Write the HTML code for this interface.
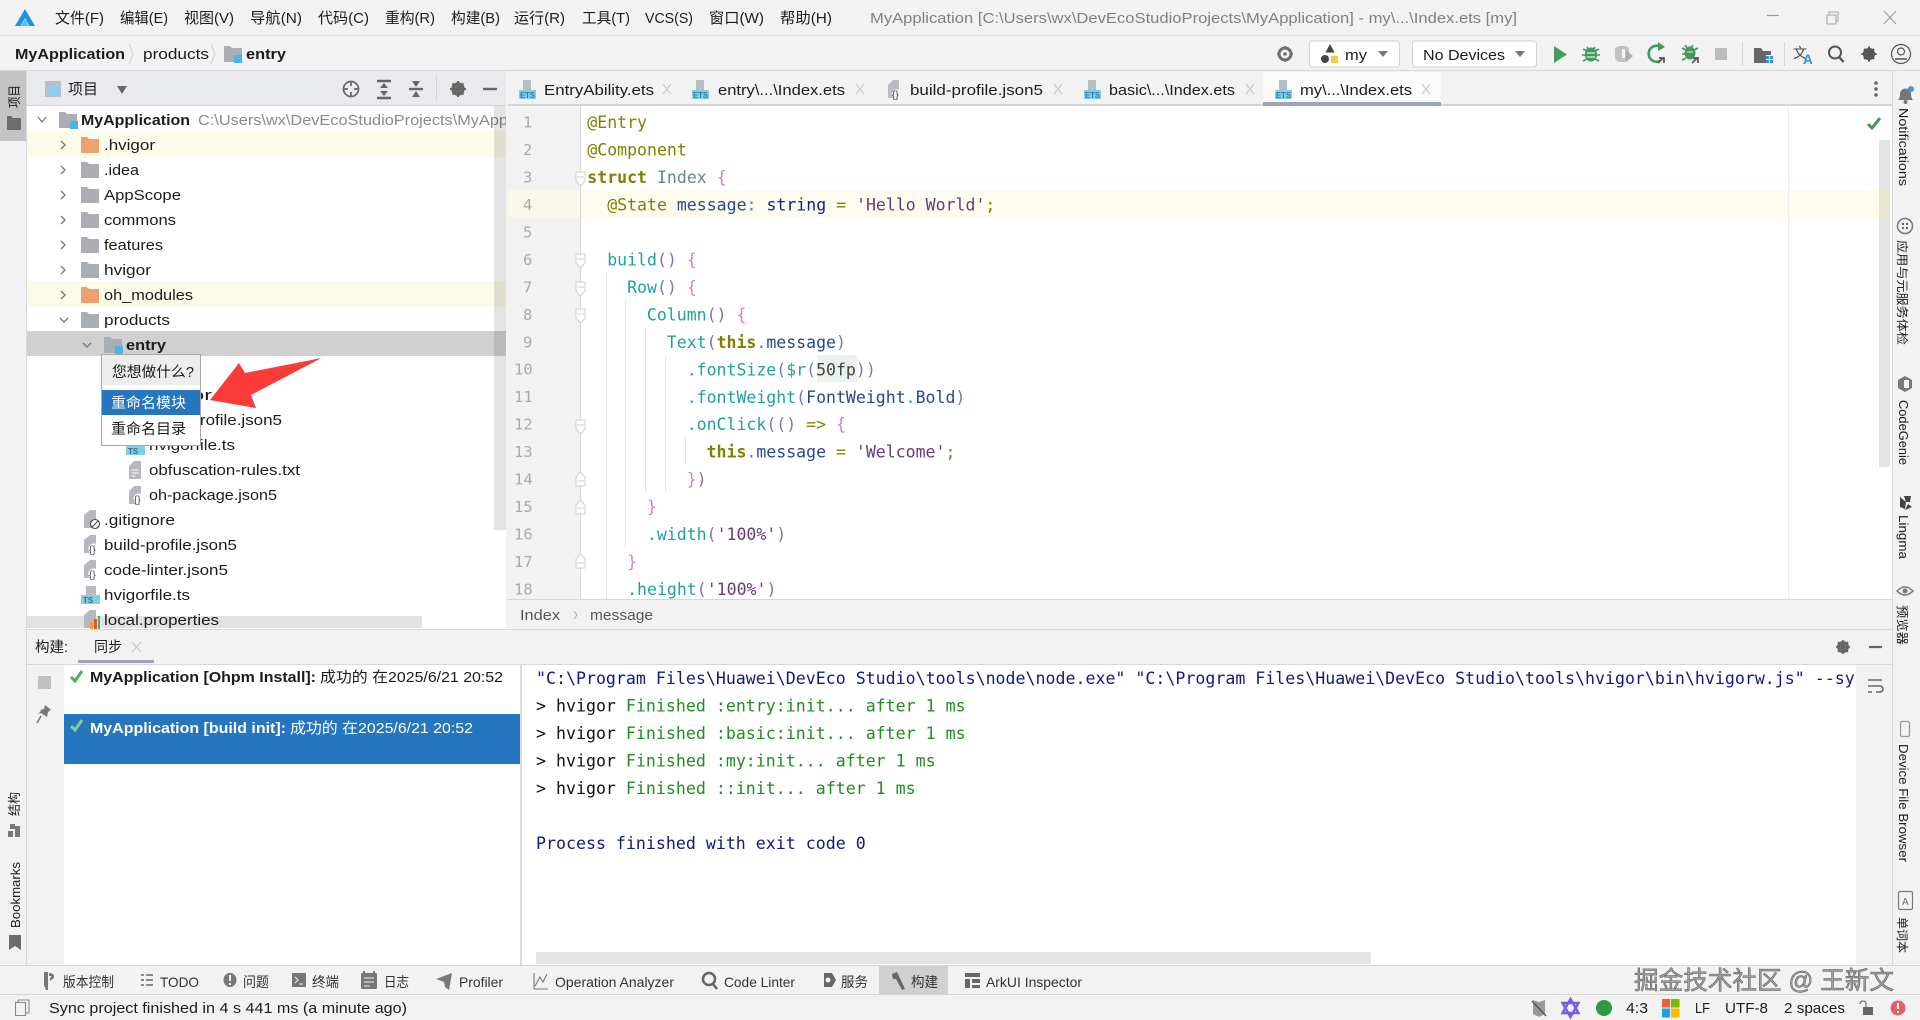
<!DOCTYPE html>
<html lang="zh"><head><meta charset="utf-8"><title>MyApplication</title>
<style>
html,body{margin:0;padding:0;background:#f2f2f2;overflow:hidden}
svg{display:block}
text{font-family:"Liberation Sans","Noto Sans CJK SC",sans-serif;font-size:15px;fill:#1c1c1c}
.g{fill:#808080}
.b{font-weight:bold}
.m{font-family:"DejaVu Sans Mono","Liberation Mono",monospace;font-size:16.55px;white-space:pre}
.c{font-size:16.6px}
.ln{font-family:"DejaVu Sans Mono","Liberation Mono",monospace;font-size:15.5px;fill:#a9a9a9}
.ol{fill:#808000}.olb{fill:#808000;font-weight:bold}.te{fill:#22a0a0}.pu{fill:#7878b8}.pk{fill:#d87fc0}.nv{fill:#27488e}.dk{fill:#10228c}.st{fill:#6a3a78}.gy{fill:#668888}
.cb{fill:#111a80}.cg{fill:#1f8f1f}.ck{fill:#111}
.tb{font-size:14px;fill:#333}
</style></head><body>
<svg width="1920" height="1020" viewBox="0 0 1920 1020" xmlns="http://www.w3.org/2000/svg">
<rect width="1920" height="1020" fill="#f2f2f2"/>

<!-- title bar -->
<path d="M25 9L35 26H29.5L25 18 20.5 26H15Z" fill="#1c8fe6"/><path d="M25 19L29 26H21Z" fill="#57c3e8"/>
<text x="55" y="23" textLength="49" lengthAdjust="spacingAndGlyphs">文件(F)</text>
<text x="120" y="23" textLength="48" lengthAdjust="spacingAndGlyphs">编辑(E)</text>
<text x="184" y="23" textLength="50" lengthAdjust="spacingAndGlyphs">视图(V)</text>
<text x="250" y="23" textLength="52" lengthAdjust="spacingAndGlyphs">导航(N)</text>
<text x="318" y="23" textLength="51" lengthAdjust="spacingAndGlyphs">代码(C)</text>
<text x="385" y="23" textLength="50" lengthAdjust="spacingAndGlyphs">重构(R)</text>
<text x="451" y="23" textLength="49" lengthAdjust="spacingAndGlyphs">构建(B)</text>
<text x="514" y="23" textLength="51" lengthAdjust="spacingAndGlyphs">运行(R)</text>
<text x="582" y="23" textLength="48" lengthAdjust="spacingAndGlyphs">工具(T)</text>
<text x="645" y="23" textLength="48" lengthAdjust="spacingAndGlyphs">VCS(S)</text>
<text x="709" y="23" textLength="55" lengthAdjust="spacingAndGlyphs">窗口(W)</text>
<text x="780" y="23" textLength="52" lengthAdjust="spacingAndGlyphs">帮助(H)</text>
<text class="g" x="870" y="23" textLength="647" lengthAdjust="spacingAndGlyphs">MyApplication [C:\Users\wx\DevEcoStudioProjects\MyApplication] - my\...\Index.ets [my]</text>
<path d="M1767 15.500h12" stroke="#999" stroke-width="1.200"/>
<path d="M1827 15h9v9h-9zM1829 15v-3h9v9h-2" fill="none" stroke="#aaa" stroke-width="1.100"/>
<path d="M1884 11l12 13M1896 11l-12 13" stroke="#999" stroke-width="1.100"/>
<rect y="35" width="1920" height="1" fill="#dcdcdc"/>

<!-- nav bar -->
<text class="b" x="15" y="59" textLength="110" lengthAdjust="spacingAndGlyphs">MyApplication</text>
<path d="M129 44l4 10-4 10" fill="none" stroke="#d0d0d0"/>
<text x="143" y="59" textLength="66" lengthAdjust="spacingAndGlyphs">products</text>
<path d="M211 44l4 10-4 10" fill="none" stroke="#d0d0d0"/>
<path d="M224 46h6l2 2h10v14h-18z" fill="#a9aeb5"/><rect x="234" y="55" width="8" height="8" fill="#4db4e4"/>
<text class="b" x="246" y="59" textLength="40" lengthAdjust="spacingAndGlyphs">entry</text>
<circle cx="1285" cy="54" r="6" fill="none" stroke="#6e6e6e" stroke-width="3"/><circle cx="1285" cy="54" r="1.800" fill="#6e6e6e"/><path d="M1285 46v2M1285 60v2M1277 54h2M1291 54h2" stroke="#6e6e6e" stroke-width="1.500"/>
<rect x="1309.500" y="41" width="90" height="26" rx="3" fill="#fff" stroke="#d2d2d2"/>
<path d="M1330 44l4.500 8.500h-9z" fill="#444"/><circle cx="1325" cy="59" r="4" fill="#444"/><rect x="1331" y="56" width="7" height="7" fill="#f5c842"/>
<text x="1345" y="60" textLength="22" lengthAdjust="spacingAndGlyphs">my</text>
<path d="M1378 51h10l-5 6z" fill="#777"/>
<rect x="1412.500" y="41" width="124" height="26" rx="3" fill="#fff" stroke="#d2d2d2"/>
<text x="1423" y="60" textLength="82" lengthAdjust="spacingAndGlyphs">No Devices</text>
<path d="M1515 51h10l-5 6z" fill="#777"/>
<path d="M1554 46l13 8.500-13 8.500z" fill="#4a9a5c"/>
<ellipse cx="1591" cy="54.500" rx="6" ry="7" fill="#3f9a5c"/><path d="M1583 49l4 2M1599 49l-4 2M1582 55h4M1596 55h4M1583 61l4-2M1599 61l-4-2M1587 47l2 3M1595 47l-2 3" stroke="#3f9a5c" stroke-width="1.600"/><path d="M1587 53h8M1587 57h8" stroke="#e8f2ea" stroke-width="1.200"/>
<path d="M1615 48l4-2h7l3 2v11l-3 3h-7l-4-3z" fill="#c2c2c2"/><path d="M1626 50l7 6-7 6z" fill="#aeaeae"/><rect x="1622" y="49" width="3" height="9" fill="#f2f2f2"/>
<path d="M1661 47a8 8 0 1 0-1 14" fill="none" stroke="#3f9a5c" stroke-width="2.600"/><path d="M1658 42l7 5-7 4z" fill="#3f9a5c"/><path d="M1658 63l5-5M1659 58h5v5" fill="none" stroke="#555" stroke-width="1.700"/>
<ellipse cx="1690" cy="53" rx="5.500" ry="6.500" fill="#3f9a5c"/><path d="M1682 48l4 2M1698 48l-4 2M1682 54h4M1682 60l4-2M1685 45l2 3M1693 45l-2 3" stroke="#3f9a5c" stroke-width="1.600"/><path d="M1692 63l5-5M1693 58h5v5" fill="none" stroke="#555" stroke-width="1.700"/><path d="M1687 52h6" stroke="#e8f2ea"/>
<rect x="1715" y="48" width="12" height="12" fill="#bbb"/>
<rect x="1742" y="42" width="1" height="24" fill="#d6d6d6"/>
<path d="M1754 48h7l2 3h8v4h-5v8h-12z" fill="#666"/><rect x="1766" y="56" width="3" height="3" fill="#3b8fd6"/><rect x="1770" y="56" width="3" height="3" fill="#3b8fd6"/><rect x="1766" y="60" width="3" height="3" fill="#3b8fd6"/><rect x="1770" y="60" width="3" height="3" fill="#3b8fd6"/>
<rect x="1784" y="42" width="1" height="24" fill="#d6d6d6"/>
<text x="1793" y="58" style="font-size:14px;fill:#444">文</text>
<text class="b" x="1803" y="64" style="font-size:13.500px;fill:#2f8fe0">A</text>
<circle cx="1835" cy="52.500" r="6" fill="none" stroke="#555" stroke-width="2"/><path d="M1839.500 57.500l4 4.500" stroke="#555" stroke-width="2.400"/>
<circle cx="1869" cy="54" r="4.500" fill="none" stroke="#555" stroke-width="3.200"/><path d="M1869 46.500v15M1861.500 54h15M1864 49l10 10M1874 49l-10 10" stroke="#555" stroke-width="2"/>
<circle cx="1901" cy="54" r="9.500" fill="none" stroke="#555" stroke-width="1.200"/><circle cx="1901" cy="51.500" r="3.500" fill="none" stroke="#555" stroke-width="1.200"/><path d="M1895 59h12" fill="none" stroke="#555" stroke-width="1.500"/>
<rect y="70" width="1920" height="1" fill="#d8d8d8"/>

<!-- left stripe -->
<rect x="0" y="71" width="26" height="70" fill="#c4c4c4"/>
<rect x="26" y="71" width="1" height="894" fill="#d8d8d8"/>
<text transform="translate(19,108) rotate(-90)" style="font-size:13px" textLength="23" lengthAdjust="spacingAndGlyphs">项目</text>
<path d="M7 116h4l2 2h8v12H7z" fill="#6c6c6c"/>
<text transform="translate(19,816) rotate(-90)" style="font-size:13px" textLength="24" lengthAdjust="spacingAndGlyphs">结构</text>
<path d="M10 824h5v5h-5zM8 831h5v6H8zM15 826h5v11h-5z" fill="#777"/>
<text transform="translate(20,928) rotate(-90)" style="font-size:12.500px" textLength="66" lengthAdjust="spacingAndGlyphs">Bookmarks</text>
<path d="M9 935h12v15l-6-4-6 4z" fill="#6c6c6c"/>

<!-- project header -->
<rect x="27" y="71" width="479" height="35" fill="#e8eaee"/>
<rect x="27" y="105" width="479" height="1" fill="#d2d2d2"/>
<rect x="45" y="81" width="16" height="16" fill="#b9bec6"/><rect x="47" y="85" width="12" height="10" fill="#8ecff0"/>
<text x="68" y="94" textLength="30" lengthAdjust="spacingAndGlyphs">项目</text>
<path d="M117 86h10l-5 8z" fill="#666"/>
<circle cx="351" cy="89" r="7.500" fill="none" stroke="#666" stroke-width="1.700"/><path d="M351 81v5M351 92v5M343 89h5M354 89h5" stroke="#666" stroke-width="1.700"/>
<path d="M377 81h14M377 98h14" stroke="#666" stroke-width="2.400"/><path d="M384 83l4 5h-8zM384 96l-4-5h8z" fill="#666"/>
<path d="M409 89h14" stroke="#666" stroke-width="2.400"/><path d="M416 87l4-6h-8zM416 91l-4 6h8z" fill="#666"/>
<rect x="436" y="76" width="1" height="24" fill="#d4d4d4"/>
<circle cx="458" cy="89" r="5" fill="none" stroke="#666" stroke-width="3.400"/><path d="M458 81v16M450 89h16M452.500 83.500l11 11M463.500 83.500l-11 11" stroke="#666" stroke-width="2"/>
<path d="M483 89h14" stroke="#666" stroke-width="2.400"/>

<!-- tree -->
<rect x="27" y="106" width="479" height="523" fill="#fff"/>
<rect x="27" y="131" width="479" height="26" fill="#fcfae9"/>
<rect x="27" y="281" width="479" height="26" fill="#fcfae9"/>
<rect x="27" y="331" width="479" height="25" fill="#d0d0d0"/>
<rect x="27" y="616" width="395" height="12" fill="#e2e2e2"/>
<path d="M38 117l4 5 4-5" fill="none" stroke="#777" stroke-width="1.300"/>
<path d="M59 112h6l2 2h10v14H59z" fill="#a9aeb5"/><rect x="70" y="121" width="8" height="8" fill="#4db4e4"/>
<text class="b" x="81" y="125" textLength="109" lengthAdjust="spacingAndGlyphs">MyApplication</text>
<text x="198" y="125" style="fill:#8a8a8a" textLength="310" lengthAdjust="spacingAndGlyphs">C:\Users\wx\DevEcoStudioProjects\MyApp</text>
<rect x="494" y="106" width="12" height="424" fill="#000" opacity=".11"/>
<rect x="506" y="106" width="2" height="523" fill="#f2f2f2"/>

<path d="M61 141l4 4-4 4M61 166l4 4-4 4M61 191l4 4-4 4M61 216l4 4-4 4M61 241l4 4-4 4M61 266l4 4-4 4M61 291l4 4-4 4" fill="none" stroke="#777" stroke-width="1.300"/>
<path d="M60 318l4 4 4-4" fill="none" stroke="#777" stroke-width="1.300"/>
<path d="M81 137h6l2 2h10v14H81z" fill="#f0a06e"/>
<path d="M81 162h6l2 2h10v14H81z" fill="#a9aeb5"/>
<path d="M81 187h6l2 2h10v14H81z" fill="#a9aeb5"/>
<path d="M81 212h6l2 2h10v14H81z" fill="#a9aeb5"/>
<path d="M81 237h6l2 2h10v14H81z" fill="#a9aeb5"/>
<path d="M81 262h6l2 2h10v14H81z" fill="#a9aeb5"/>
<path d="M81 287h6l2 2h10v14H81z" fill="#f0a06e"/>
<path d="M81 312h6l2 2h10v14H81z" fill="#a9aeb5"/>
<text x="104" y="150" textLength="51" lengthAdjust="spacingAndGlyphs">.hvigor</text>
<text x="104" y="175" textLength="35" lengthAdjust="spacingAndGlyphs">.idea</text>
<text x="104" y="200" textLength="77" lengthAdjust="spacingAndGlyphs">AppScope</text>
<text x="104" y="225" textLength="72" lengthAdjust="spacingAndGlyphs">commons</text>
<text x="104" y="250" textLength="59" lengthAdjust="spacingAndGlyphs">features</text>
<text x="104" y="275" textLength="47" lengthAdjust="spacingAndGlyphs">hvigor</text>
<text x="104" y="300" textLength="89" lengthAdjust="spacingAndGlyphs">oh_modules</text>
<text x="104" y="325" textLength="66" lengthAdjust="spacingAndGlyphs">products</text>
<path d="M83 343l4 4 4-4" fill="none" stroke="#777" stroke-width="1.300"/>
<path d="M104 337h6l2 2h10v14h-18z" fill="#a9aeb5"/><rect x="115" y="346" width="8" height="8" fill="#4db4e4"/>
<text class="b" x="126" y="350" textLength="40" lengthAdjust="spacingAndGlyphs">entry</text>

<text x="149" y="400" textLength="63" lengthAdjust="spacingAndGlyphs">hvigor</text>
<text x="149" y="425" textLength="133" lengthAdjust="spacingAndGlyphs">build-profile.json5</text>
<path d="M133 436h8v10h-8z" fill="#b8bcc2"/><rect x="126" y="446" width="19" height="9" fill="#7fcfe8"/><text class="b" x="128" y="454" style="font-size:8px;fill:#3f6f80">TS</text>
<text x="149" y="450" textLength="86" lengthAdjust="spacingAndGlyphs">hvigorfile.ts</text>
<path d="M134 461h7v18h-12v-13z" fill="#b5b9bf"/><path d="M131.500 470h7M131.500 473h7M131.500 476h4" stroke="#fff"/>
<text x="149" y="475" textLength="151" lengthAdjust="spacingAndGlyphs">obfuscation-rules.txt</text>
<path d="M134 486h7v18h-12v-13z" fill="#b5b9bf"/><circle cx="139" cy="499" r="5.500" fill="#fff"/><text x="134" y="503" style="font-size:10px;fill:#444">{}</text>
<text x="149" y="500" textLength="128" lengthAdjust="spacingAndGlyphs">oh-package.json5</text>
<path d="M90 510h6v18H84v-13z" fill="#b5b9bf"/><circle cx="95" cy="524" r="4.500" fill="#fff" stroke="#444" stroke-width="1.100"/><path d="M92 527l6-6" stroke="#444"/>
<text x="104" y="525" textLength="71" lengthAdjust="spacingAndGlyphs">.gitignore</text>
<path d="M90 535h6v18H84v-13z" fill="#b5b9bf"/><circle cx="94" cy="549" r="5.500" fill="#fff"/><text x="89" y="553" style="font-size:10px;fill:#444">{}</text>
<text x="104" y="550" textLength="133" lengthAdjust="spacingAndGlyphs">build-profile.json5</text>
<path d="M90 560h6v18H84v-13z" fill="#b5b9bf"/><circle cx="94" cy="574" r="5.500" fill="#fff"/><text x="89" y="578" style="font-size:10px;fill:#444">{}</text>
<text x="104" y="575" textLength="124" lengthAdjust="spacingAndGlyphs">code-linter.json5</text>
<path d="M86 586h10v10H86z" fill="#b8bcc2"/><rect x="81" y="595" width="19" height="9" fill="#7fcfe8"/><text class="b" x="83" y="603" style="font-size:8px;fill:#3f6f80">TS</text>
<text x="104" y="600" textLength="86" lengthAdjust="spacingAndGlyphs">hvigorfile.ts</text>
<path d="M90 610h6v18H84v-13z" fill="#b5b9bf"/>
<rect x="90" y="622" width="3" height="7" fill="#e8a33c"/><rect x="94" y="619" width="3" height="10" fill="#d9534f"/><rect x="98" y="616" width="2" height="13" fill="#5aa85a"/>
<text x="104" y="625" textLength="115" lengthAdjust="spacingAndGlyphs">local.properties</text>

<!-- popup -->
<rect x="101.500" y="354.500" width="99" height="91" fill="#fff" stroke="#a8a8a8"/>
<rect x="102" y="355" width="98" height="30" fill="#ededed"/>
<text x="112" y="377" textLength="82" lengthAdjust="spacingAndGlyphs" style="font-size:14.500px">您想做什么?</text>
<rect x="102" y="390" width="98" height="25" fill="#2675bf"/>
<text x="111" y="408" textLength="75" lengthAdjust="spacingAndGlyphs" style="font-size:14.500px;fill:#fff">重命名模块</text>
<text x="111" y="434" textLength="75" lengthAdjust="spacingAndGlyphs" style="font-size:14.500px">重命名目录</text>
<path d="M321.500 358L245 373 239 363 210 400 256 408 251 395Z" fill="#fb3a3a"/>

<!-- tab bar -->
<rect x="1263" y="72" width="178" height="31" fill="#fbfbfb"/>
<rect x="508" y="104" width="1384" height="2" fill="#d4d4d4"/>
<rect x="1263" y="102" width="178" height="4" fill="#9fa3bd"/>

<path d="M523 80h8v11h-8z" fill="#b9bdc3"/><rect x="519" y="90" width="17" height="9" fill="#7fcfe8"/><text class="b" x="520" y="98" style="font-size:8px;fill:#2f7c9c" textLength="15" lengthAdjust="spacingAndGlyphs">ETS</text>
<text x="544" y="95" textLength="110" lengthAdjust="spacingAndGlyphs">EntryAbility.ets</text>
<path d="M663 84l8 10M671 84l-8 10" stroke="#c8c8c8" stroke-width="1.200"/>
<path d="M696 80h8v11h-8z" fill="#b9bdc3"/><rect x="692" y="90" width="17" height="9" fill="#7fcfe8"/><text class="b" x="693" y="98" style="font-size:8px;fill:#2f7c9c" textLength="15" lengthAdjust="spacingAndGlyphs">ETS</text>
<text x="718" y="95" textLength="127" lengthAdjust="spacingAndGlyphs">entry\...\Index.ets</text>
<path d="M856 84l8 10M864 84l-8 10" stroke="#c8c8c8" stroke-width="1.200"/>
<path d="M893 80h6v18h-11v-13z" fill="#b9bdc3"/><circle cx="897" cy="94" r="5" fill="#f2f2f2"/><text x="892" y="98" style="font-size:10px;fill:#444">{}</text>
<text x="910" y="95" textLength="133" lengthAdjust="spacingAndGlyphs">build-profile.json5</text>
<path d="M1054 84l8 10M1062 84l-8 10" stroke="#c8c8c8" stroke-width="1.200"/>
<path d="M1088 80h8v11h-8z" fill="#b9bdc3"/><rect x="1084" y="90" width="17" height="9" fill="#7fcfe8"/><text class="b" x="1085" y="98" style="font-size:8px;fill:#2f7c9c" textLength="15" lengthAdjust="spacingAndGlyphs">ETS</text>
<text x="1109" y="95" textLength="126" lengthAdjust="spacingAndGlyphs">basic\...\Index.ets</text>
<path d="M1246 84l8 10M1254 84l-8 10" stroke="#c8c8c8" stroke-width="1.200"/>
<path d="M1279 80h8v11h-8z" fill="#b9bdc3"/><rect x="1275" y="90" width="17" height="9" fill="#7fcfe8"/><text class="b" x="1276" y="98" style="font-size:8px;fill:#2f7c9c" textLength="15" lengthAdjust="spacingAndGlyphs">ETS</text>
<text x="1300" y="95" textLength="112" lengthAdjust="spacingAndGlyphs">my\...\Index.ets</text>
<path d="M1422 84l8 10M1430 84l-8 10" stroke="#c8c8c8" stroke-width="1.200"/>
<circle cx="1876" cy="83" r="1.800" fill="#666"/><circle cx="1876" cy="89" r="1.800" fill="#666"/><circle cx="1876" cy="95" r="1.800" fill="#666"/>

<!-- editor -->
<rect x="508" y="106" width="1384" height="493" fill="#fff"/>
<rect x="508" y="106" width="72" height="493" fill="#f2f2f2"/>
<rect x="508" y="190" width="72" height="27" fill="#faf8ea"/>
<rect x="581" y="190" width="1298" height="27" fill="#fcfbee"/>
<rect x="580" y="106" width="1" height="493" fill="#d8d8d8"/>
<rect x="1788" y="106" width="1" height="493" fill="#ececec"/>
<rect x="1879" y="140" width="11" height="327" fill="#e3e3e3"/>
<path d="M1868 124l4 4 8-10" fill="none" stroke="#3f9a5c" stroke-width="3"/>
<rect x="1880" y="190" width="10" height="27" fill="#e8e6d2"/>

<path d="M606.500 272V599M625.500 300V547M645.500 328V492M665.500 356V492M685.500 437V463" stroke="#e4e4e4" fill="none"/>
<text class="ln" x="523" y="127.500">1</text><text class="ln" x="523" y="155">2</text><text class="ln" x="523" y="182.400">3</text><text class="ln" x="523" y="209.900">4</text><text class="ln" x="523" y="237.400">5</text><text class="ln" x="523" y="264.900">6</text><text class="ln" x="523" y="292.300">7</text><text class="ln" x="523" y="319.800">8</text><text class="ln" x="523" y="347.300">9</text>
<text class="ln" x="514" y="374.700">10</text><text class="ln" x="514" y="402.200">11</text><text class="ln" x="514" y="429.700">12</text><text class="ln" x="514" y="457.100">13</text><text class="ln" x="514" y="484.600">14</text><text class="ln" x="514" y="512.100">15</text><text class="ln" x="514" y="539.500">16</text><text class="ln" x="514" y="567">17</text><text class="ln" x="514" y="594.500">18</text>
<g fill="#fff" stroke="#cfcfcf"><path d="M576 172h9v9l-4.500 5-4.500-5z"/><path d="M576 254h9v9l-4.500 5-4.500-5z"/><path d="M576 282h9v9l-4.500 5-4.500-5z"/><path d="M576 309h9v9l-4.500 5-4.500-5z"/><path d="M576 420h9v9l-4.500 5-4.500-5z"/><path d="M576 486h9v-9l-4.500-5-4.500 5z"/><path d="M576 514h9v-9l-4.500-5-4.500 5z"/><path d="M576 568h9v-9l-4.500-5-4.500 5z"/></g>
<path d="M577 481h7M577 508h7M577 563h7M577 177h7M577 259h7M577 287h7M577 314h7M577 425h7" stroke="#cfcfcf"/>

<text class="m" x="587.300" y="128"><tspan class="ol">@Entry</tspan></text>
<text class="m" x="587.300" y="155.500"><tspan class="ol">@Component</tspan></text>
<text class="m" x="587.300" y="183"><tspan class="olb">struct</tspan> <tspan class="gy">Index</tspan> <tspan class="pk">{</tspan></text>
<text class="m" x="607.200" y="210.500"><tspan class="ol">@State</tspan> <tspan class="nv">message</tspan><tspan class="te">:</tspan> <tspan class="dk">string</tspan> <tspan class="ol">=</tspan> <tspan class="st">'Hello World'</tspan><tspan class="ol">;</tspan></text>
<text class="m" x="607.200" y="265.400"><tspan class="te">build</tspan><tspan class="pu">()</tspan> <tspan class="pk">{</tspan></text>
<text class="m" x="627.100" y="292.900"><tspan class="te">Row</tspan><tspan class="pu">()</tspan> <tspan class="pk">{</tspan></text>
<text class="m" x="646.900" y="320.300"><tspan class="te">Column</tspan><tspan class="pu">()</tspan> <tspan class="pk">{</tspan></text>
<text class="m" x="666.800" y="347.800"><tspan class="te">Text</tspan><tspan class="pu">(</tspan><tspan class="olb">this</tspan><tspan class="te">.</tspan><tspan class="nv">message</tspan><tspan class="pu">)</tspan></text>
<rect x="817" y="355" width="40" height="27" fill="#e9f3e9"/>
<text class="m" x="686.700" y="375.300"><tspan class="te">.fontSize</tspan><tspan class="pu">(</tspan><tspan class="te">$r</tspan><tspan class="pu">(</tspan><tspan style="fill:#444">50fp</tspan><tspan class="pu">))</tspan></text>
<text class="m" x="686.700" y="402.800"><tspan class="te">.fontWeight</tspan><tspan class="pu">(</tspan><tspan class="nv">FontWeight</tspan><tspan class="te">.</tspan><tspan class="nv">Bold</tspan><tspan class="pu">)</tspan></text>
<text class="m" x="686.700" y="430.200"><tspan class="te">.onClick</tspan><tspan class="pu">(()</tspan> <tspan class="ol">=&gt;</tspan> <tspan class="pk">{</tspan></text>
<text class="m" x="706.600" y="457.700"><tspan class="olb">this</tspan><tspan class="te">.</tspan><tspan class="nv">message</tspan> <tspan class="ol">=</tspan> <tspan class="st">'Welcome'</tspan><tspan class="ol">;</tspan></text>
<text class="m" x="686.700" y="485.100"><tspan class="pk">}</tspan><tspan class="pu">)</tspan></text>
<text class="m" x="646.900" y="512.600"><tspan class="pk">}</tspan></text>
<text class="m" x="646.900" y="540"><tspan class="te">.width</tspan><tspan class="pu">(</tspan><tspan class="st">'100%'</tspan><tspan class="pu">)</tspan></text>
<text class="m" x="627.100" y="567.500"><tspan class="pk">}</tspan></text>
<text class="m" x="627.100" y="595"><tspan class="te">.height</tspan><tspan class="pu">(</tspan><tspan class="st">'100%'</tspan><tspan class="pu">)</tspan></text>

<!-- breadcrumb -->
<rect x="508" y="599" width="1384" height="31" fill="#f2f2f2"/>
<rect x="508" y="599" width="1384" height="1" fill="#d6d6d6"/>
<text x="520" y="620" style="fill:#555" textLength="40" lengthAdjust="spacingAndGlyphs">Index</text>
<path d="M574 611l3 4-3 4" fill="none" stroke="#aaa"/>
<text x="590" y="620" style="fill:#555" textLength="63" lengthAdjust="spacingAndGlyphs">message</text>

<!-- bottom panel header -->
<rect x="27" y="629" width="1865" height="36" fill="#f2f2f2"/>
<rect x="27" y="629" width="1865" height="1" fill="#d8d8d8"/>
<text x="35" y="652" textLength="33" lengthAdjust="spacingAndGlyphs" style="font-size:14.500px">构建:</text>
<text x="94" y="652" textLength="28" lengthAdjust="spacingAndGlyphs" style="font-size:14.500px">同步</text>
<path d="M132 642l9 10M141 642l-9 10" stroke="#c8c8c8" stroke-width="1.200"/>
<rect x="78" y="660" width="76" height="3" fill="#a0a3b8"/>
<rect x="27" y="664" width="1865" height="1" fill="#d8d8d8"/>
<circle cx="1843" cy="647" r="4.500" fill="none" stroke="#666" stroke-width="3"/><path d="M1843 640v14M1836 647h14M1838 642l10 10M1848 642l-10 10" stroke="#666" stroke-width="1.800"/>
<path d="M1869 647h13" stroke="#666" stroke-width="2.200"/>

<!-- build strip + tree -->
<rect x="27" y="665" width="37" height="300" fill="#f2f2f2"/>
<rect x="38" y="676" width="13" height="13" fill="#c0c0c0"/>
<path d="M45 705l6 5-3 2-1 5-6-4-3 1 3-3-1-1 4-1z" fill="#777"/><path d="M41 716l-4 7" stroke="#777" stroke-width="1.500"/>
<rect x="64" y="665" width="456" height="300" fill="#fff"/>
<rect x="64" y="714" width="456" height="50" fill="#2675bf"/>
<path d="M71 677l4 4 7-10" fill="none" stroke="#4caf60" stroke-width="3"/>
<text class="b" x="90" y="682" textLength="226" lengthAdjust="spacingAndGlyphs">MyApplication [Ohpm Install]:</text>
<text x="320" y="682" textLength="183" lengthAdjust="spacingAndGlyphs">成功的 在2025/6/21 20:52</text>
<path d="M71 726l4 4 7-10" fill="none" stroke="#7fd08c" stroke-width="3"/>
<text class="b" x="90" y="733" style="fill:#fff" textLength="196" lengthAdjust="spacingAndGlyphs">MyApplication [build init]:</text>
<text x="290" y="733" style="fill:#fff" textLength="183" lengthAdjust="spacingAndGlyphs">成功的 在2025/6/21 20:52</text>
<rect x="520" y="665" width="2" height="300" fill="#dcdcdc"/>

<!-- console -->
<rect x="522" y="665" width="1334" height="300" fill="#fff"/>
<text class="m c cb" x="536" y="684">"C:\Program Files\Huawei\DevEco Studio\tools\node\node.exe" "C:\Program Files\Huawei\DevEco Studio\tools\hvigor\bin\hvigorw.js" --sy</text>
<text class="m c" x="536" y="711.500"><tspan class="ck">&gt; hvigor </tspan><tspan class="cg">Finished :entry:init... after 1 ms</tspan></text>
<text class="m c" x="536" y="739"><tspan class="ck">&gt; hvigor </tspan><tspan class="cg">Finished :basic:init... after 1 ms</tspan></text>
<text class="m c" x="536" y="766.500"><tspan class="ck">&gt; hvigor </tspan><tspan class="cg">Finished :my:init... after 1 ms</tspan></text>
<text class="m c" x="536" y="794"><tspan class="ck">&gt; hvigor </tspan><tspan class="cg">Finished ::init... after 1 ms</tspan></text>
<text class="m c cb" x="536" y="849">Process finished with exit code 0</text>
<rect x="536" y="952" width="835" height="12" fill="#e3e3e3"/>
<rect x="1856" y="665" width="36" height="300" fill="#f2f2f2"/>
<path d="M1868 680h14M1868 686h12a3 3 0 0 1 0 6h-4M1868 692h4" fill="none" stroke="#666" stroke-width="1.600"/>

<!-- right stripe -->
<rect x="1892" y="71" width="28" height="894" fill="#f2f2f2"/>
<rect x="1892" y="71" width="1" height="894" fill="#d8d8d8"/>
<path d="M1898 100q2-2 2-6a5.500 5.500 0 0 1 11 0q0 4 2 6z" fill="#777"/><circle cx="1905.500" cy="102" r="2" fill="#777"/><circle cx="1911" cy="89" r="3" fill="#3b9ae0"/>
<text transform="translate(1899,108) rotate(90)" style="font-size:12.500px" textLength="78" lengthAdjust="spacingAndGlyphs">Notifications</text>
<circle cx="1905" cy="226" r="7.500" fill="none" stroke="#777" stroke-width="1.500"/><path d="M1902 223h2v2h-2zM1906 223h2v2h-2zM1902 227h2v2h-2zM1906 227h2v2h-2z" fill="#666"/>
<text transform="translate(1898,240) rotate(90)" style="font-size:12px" textLength="105" lengthAdjust="spacingAndGlyphs">应用与元服务体检</text>
<path d="M1905 376l7 4v8l-7 4-7-4v-8z" fill="#777"/><rect x="1904" y="380" width="5" height="8" fill="#f2f2f2"/>
<text transform="translate(1899,400) rotate(90)" style="font-size:12.500px" textLength="65" lengthAdjust="spacingAndGlyphs">CodeGenie</text>
<path d="M1900 497l6 5-1 7 -5-2zM1904 496h7l-1 6-4 0zM1908 504l4 3-7 3z" fill="#444"/>
<text transform="translate(1899,515) rotate(90)" style="font-size:12.500px" textLength="44" lengthAdjust="spacingAndGlyphs">Lingma</text>
<path d="M1897 591q8-8 16 0q-8 8-16 0z" fill="none" stroke="#777" stroke-width="1.500"/><circle cx="1905" cy="591" r="2.500" fill="#777"/>
<text transform="translate(1898,605) rotate(90)" style="font-size:12px" textLength="40" lengthAdjust="spacingAndGlyphs">预览器</text>
<rect x="1900.500" y="721.500" width="9" height="15" rx="1.500" fill="none" stroke="#999" stroke-width="1.300"/>
<text transform="translate(1899,744) rotate(90)" style="font-size:12.500px" textLength="118" lengthAdjust="spacingAndGlyphs">Device File Browser</text>
<rect x="1898.500" y="891.500" width="14" height="18" rx="1.500" fill="none" stroke="#777" stroke-width="1.200"/><text x="1902" y="905" style="font-size:10px;fill:#666">A</text>
<text transform="translate(1898,917) rotate(90)" style="font-size:12px" textLength="36" lengthAdjust="spacingAndGlyphs">单词本</text>

<!-- bottom tool bar -->
<rect x="0" y="965" width="1920" height="1" fill="#d4d4d4"/>
<rect x="879" y="966" width="69" height="28" fill="#d0d0d0"/>
<path d="M44 972h4v18h-2l-2-5zM49 973q6 0 5 5l-4 3v-3q2-1 1-2l-2 0z" fill="#777"/>
<text class="tb" x="63" y="987" textLength="51" lengthAdjust="spacingAndGlyphs">版本控制</text>
<path d="M141 974h3v2h-3zM146 974h7v2h-7zM141 979h3v2h-3zM146 979h7v2h-7zM141 984h3v2h-3zM146 984h7v2h-7z" fill="#888"/>
<text class="tb" x="160" y="987" textLength="39" lengthAdjust="spacingAndGlyphs">TODO</text>
<ellipse cx="230" cy="980" rx="6.500" ry="7" fill="#777"/><rect x="229" y="975" width="2" height="6" fill="#f2f2f2"/><rect x="229" y="983" width="2" height="2" fill="#f2f2f2"/>
<text class="tb" x="243" y="987" textLength="26" lengthAdjust="spacingAndGlyphs">问题</text>
<rect x="292" y="973" width="14" height="14" fill="#777"/><path d="M295 977l3 3-3 3M299 984h4" fill="none" stroke="#f2f2f2"/>
<text class="tb" x="312" y="987" textLength="27" lengthAdjust="spacingAndGlyphs">终端</text>
<rect x="361" y="973" width="16" height="16" rx="1" fill="#777"/><path d="M364 971v3M374 971v3" stroke="#777" stroke-width="2"/><path d="M364 978h10M364 982h10M364 986h6" stroke="#f2f2f2"/>
<text class="tb" x="384" y="987" textLength="25" lengthAdjust="spacingAndGlyphs">日志</text>
<path d="M452 973l-3 17-4-3-1-5-8-3z" fill="#777"/>
<text class="tb" x="459" y="987" textLength="44" lengthAdjust="spacingAndGlyphs">Profiler</text>
<path d="M534 973v16h14M535 986l5-9 3 5 4-8" fill="none" stroke="#777" stroke-width="1.100"/>
<text class="tb" x="555" y="987" textLength="119" lengthAdjust="spacingAndGlyphs">Operation Analyzer</text>
<circle cx="709" cy="979" r="6" fill="none" stroke="#666" stroke-width="2.500"/><path d="M713 984l4 5" stroke="#666" stroke-width="2.500"/>
<text class="tb" x="724" y="987" textLength="71" lengthAdjust="spacingAndGlyphs">Code Linter</text>
<path d="M824 973h8l4 7-4 7h-8z" fill="#666"/><circle cx="828" cy="980" r="2.500" fill="#f2f2f2"/>
<text class="tb" x="841" y="987" textLength="27" lengthAdjust="spacingAndGlyphs">服务</text>
<path d="M892 974l5-2 8 17-3 1-6-11-3 0z" fill="#666"/>
<text class="tb" x="911" y="987" textLength="27" lengthAdjust="spacingAndGlyphs">构建</text>
<path d="M965 973h15v4h-15zM965 979h5v9h-5zM972 979h8v4h-8zM972 985h8v3h-8z" fill="#666"/>
<text class="tb" x="986" y="987" textLength="96" lengthAdjust="spacingAndGlyphs">ArkUI Inspector</text>
<text x="1634" y="989" style="font-size:25px;fill:#a0a0a0;stroke:#555;stroke-width:.5px" textLength="260" lengthAdjust="spacingAndGlyphs">掘金技术社区 @ 王新文</text>

<!-- status bar -->
<rect x="0" y="994" width="1920" height="1" fill="#d4d4d4"/>
<path d="M15.500 1002.500h10v13h-10zM18 1002v-2h11v13h-3" fill="none" stroke="#888" stroke-width="1.100"/>
<text x="49" y="1013" style="font-size:14.500px" textLength="358" lengthAdjust="spacingAndGlyphs">Sync project finished in 4 s 441 ms (a minute ago)</text>
<path d="M1533 1000l6 2 6-2v14l-6 3-6-3z" fill="#999"/><path d="M1532 1001l14 15" stroke="#555" stroke-width="1.400"/>
<path d="M1570.500 999l8 14h-16zM1570.500 1017l-8-14h16z" fill="none" stroke="#7a5ce0" stroke-width="2.400"/>
<circle cx="1604" cy="1008" r="8" fill="#2e9a44"/>
<text x="1626" y="1013" style="font-size:14.500px" textLength="22" lengthAdjust="spacingAndGlyphs">4:3</text>
<rect x="1662" y="999" width="8" height="8.500" fill="#f25f30"/><rect x="1671" y="999" width="8.500" height="8.500" fill="#7eb900"/><rect x="1662" y="1008.500" width="8" height="9" fill="#1aa3e8"/><rect x="1671" y="1008.500" width="8.500" height="9" fill="#fbb900"/>
<text x="1695" y="1013" style="font-size:14.500px" textLength="15" lengthAdjust="spacingAndGlyphs">LF</text>
<text x="1725" y="1013" style="font-size:14.500px" textLength="43" lengthAdjust="spacingAndGlyphs">UTF-8</text>
<text x="1784" y="1013" style="font-size:14.500px" textLength="61" lengthAdjust="spacingAndGlyphs">2 spaces</text>
<rect x="1863" y="1007" width="10" height="8" fill="#666"/><path d="M1860 1004q0-3 3-3t3 3v3" fill="none" stroke="#777" stroke-width="1.300"/>
<circle cx="1898" cy="1008" r="7.500" fill="#e0606a"/><rect x="1897" y="1003" width="2" height="6" fill="#fff"/><rect x="1897" y="1011" width="2" height="2" fill="#fff"/>
</svg>
</body></html>
